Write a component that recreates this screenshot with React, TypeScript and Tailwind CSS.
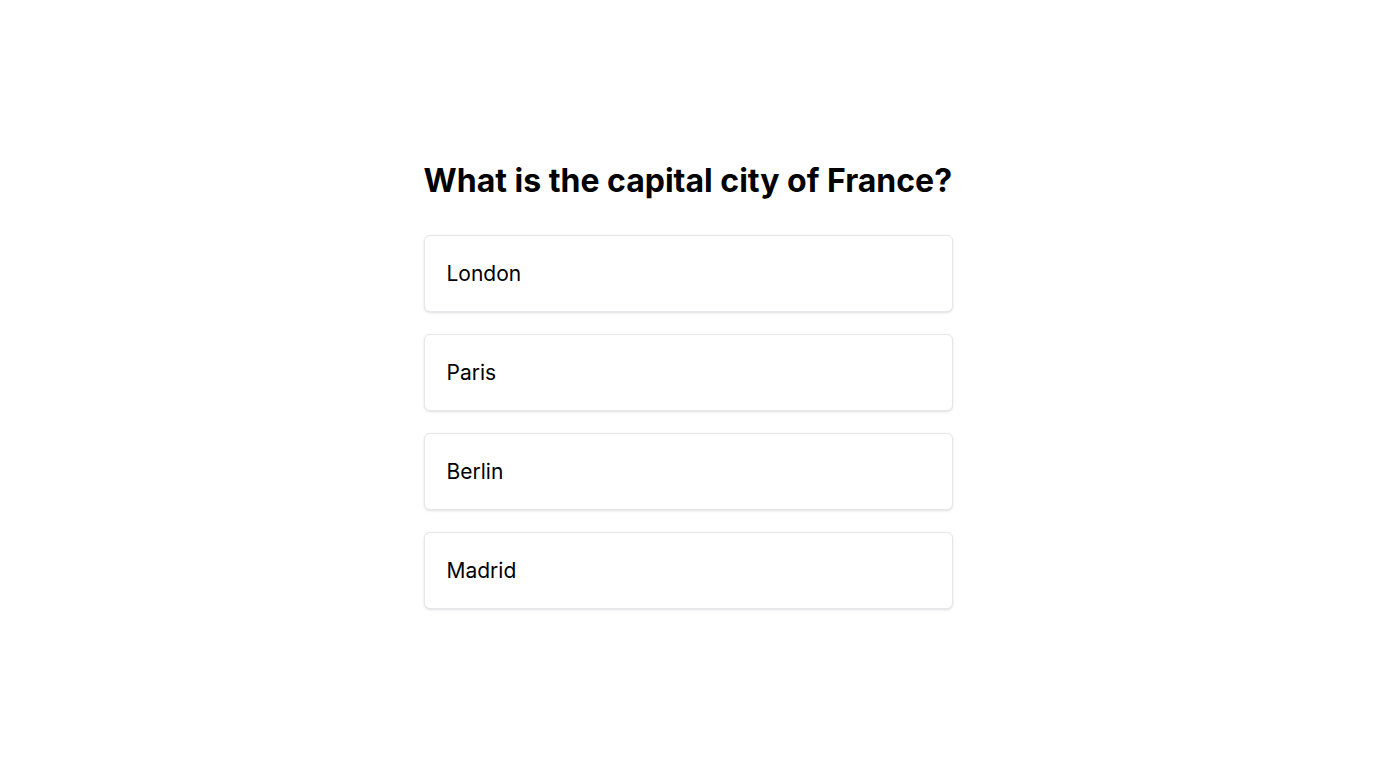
const OPTIONS = ['London', 'Paris', 'Berlin', 'Madrid']

export default function App() {
  return (
    <div className="min-h-screen bg-white flex items-center justify-center font-['Inter',sans-serif] text-black">
      <div className="w-[529px] pt-[2px]">
        <h1 className="text-[32px] leading-[40px] font-bold">What is the capital city of France?</h1>
        <div className="mt-[34px] flex flex-col gap-[22px]">
          {OPTIONS.map(o => (
            <button
              key={o}
              className="h-[77px] w-full text-left px-[22px] text-[21px] rounded-md border border-gray-200 bg-white shadow-sm"
            >
              {o}
            </button>
          ))}
        </div>
      </div>
    </div>
  )
}
